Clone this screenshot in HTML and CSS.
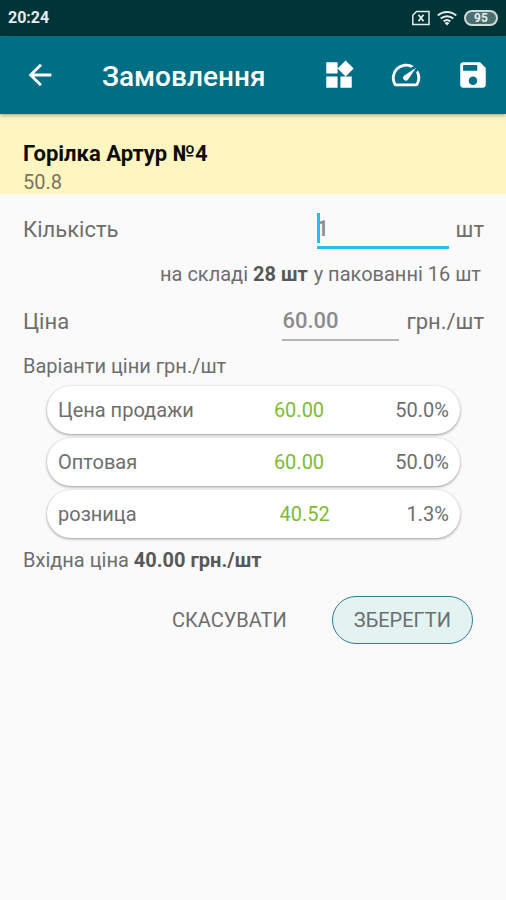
FILE: index.html
```html
<!DOCTYPE html>
<html lang="uk">
<head>
<meta charset="utf-8">
<meta name="viewport" content="width=device-width, initial-scale=1">
<title>Замовлення</title>
<link rel="stylesheet" href="styles.css">
</head>
<body>
<div class="status">
  <span class="clock">20:24</span>
  <div class="status-icons">
    <svg width="18" height="16" viewBox="0 0 18 16" fill="none" stroke="currentColor" stroke-width="1.5"><path d="M4.500 1.500H17v13H.8V5.200z"/><path d="M6.500 4.800l5 6.400M11.500 4.800l-5 6.400" stroke-width="1.800"/></svg>
    <svg width="20" height="16" viewBox="0 0 20 16" fill="none" stroke="currentColor" stroke-width="2"><path d="M.8 5.600C6 .8 14 .8 19.200 5.600M3.700 8.600c3.600-3.200 9-3.200 12.600 0M6.700 11.400c2-1.600 4.600-1.600 6.600 0"/><path d="M10 15.500l-2.400-2.500q2.400-1.800 4.800 0z" fill="currentColor" stroke="none"/></svg>
    <span class="battery">95</span>
  </div>
</div>
<header class="appbar">
  <button class="icon-button back" aria-label="Назад"><svg width="34" height="34" viewBox="0 0 24 24"><path fill="currentColor" d="M20 11H7.830l5.590-5.590L12 4l-8 8 8 8 1.410-1.410L7.830 13H20v-2z"/></svg></button>
  <h1>Замовлення</h1>
  <button class="icon-button" aria-label="Категорії"><svg width="34" height="34" viewBox="0 0 24 24"><path fill="currentColor" d="M13 13v8h8v-8h-8zM3 21h8v-8H3v8zM3 3v8h8V3H3zm13.660-1.310L11 7.340 16.660 13l5.660-5.660-5.660-5.650z"/></svg></button>
  <button class="icon-button" aria-label="Показники"><svg width="34" height="34" viewBox="0 0 24 24"><path fill="currentColor" d="M20.380 8.570l-1.230 1.850a8 8 0 0 1-.22 7.580H5.070A8 8 0 0 1 15.580 6.850l1.850-1.230A10 10 0 0 0 3.350 19a2 2 0 0 0 1.720 1h13.850a2 2 0 0 0 1.740-1 10 10 0 0 0-.27-10.440zm-9.790 6.840a2 2 0 0 0 2.830 0l5.660-8.490-8.490 5.660a2 2 0 0 0 0 2.830z"/></svg></button>
  <button class="icon-button" aria-label="Зберегти замовлення"><svg width="34" height="34" viewBox="0 0 24 24"><path fill="currentColor" d="M17 3H5c-1.110 0-2 .9-2 2v14c0 1.100.89 2 2 2h14c1.100 0 2-.9 2-2V7l-4-4zm-5 16c-1.660 0-3-1.340-3-3s1.340-3 3-3 3 1.340 3 3-1.340 3-3 3zm3-10H5V5h10v4z"/></svg></button>
</header>
<section class="product">
  <h2>Горілка Артур №4</h2>
  <p>50.8</p>
</section>
<main>
  <div class="field">
    <label for="qty">Кількість</label>
    <span class="entry entry-active"><input id="qty" type="text" inputmode="decimal" value="1"></span>
    <span class="unit">шт</span>
  </div>
  <p class="stock"><span>на складі <b>28 шт</b></span><span>у пакованні 16 шт</span></p>
  <div class="field">
    <label for="price">Ціна</label>
    <span class="entry entry-price"><input id="price" type="text" inputmode="decimal" value="60.00"></span>
    <span class="unit">грн./шт</span>
  </div>
  <h3>Варіанти ціни грн./шт</h3>
  <ul class="variants">
    <li><span class="name">Цена продажи</span><span class="amount">60.00</span><span>50.0%</span></li>
    <li><span class="name">Оптовая</span><span class="amount">60.00</span><span>50.0%</span></li>
    <li><span class="name">розница</span><span class="amount">40.52</span><span>1.3%</span></li>
  </ul>
  <p class="cost">Вхідна ціна <b>40.00 грн./шт</b></p>
  <div class="actions">
    <button class="action">СКАСУВАТИ</button>
    <button class="action action-primary">ЗБЕРЕГТИ</button>
  </div>
</main>
</body>
</html>
```
FILE: styles.css
```css
* { box-sizing: border-box; }
body {
  margin: 0;
  min-height: 100vh;
  background: #fafafa;
  color: #6e6e6e;
  font: 20px/24px Roboto, sans-serif;
}
h1, h2, h3, p, ul { margin: 0; padding: 0; }
button, input { font: inherit; color: inherit; border: 0; background: none; padding: 0; }
svg { display: block; }
b { font-weight: 700; color: #585858; }

.status {
  display: flex;
  align-items: center;
  justify-content: space-between;
  height: 36px;
  padding: 0 8px;
  background: #003538;
  color: #e4ecec;
}
.clock { font-size: 16px; font-weight: 700; }
.status-icons { display: flex; align-items: center; gap: 7px; }
.battery {
  width: 34px;
  border: 2px solid #cfdada;
  border-radius: 8px;
  background: #4b6f71;
  font-size: 12px;
  line-height: 12px;
  font-weight: 700;
  text-align: center;
}

.appbar {
  position: relative;
  display: flex;
  align-items: center;
  gap: 33px;
  height: 78px;
  padding: 0 16px 0 23px;
  background: #006f85;
  color: #fff;
  box-shadow: 0 1px 4px rgba(0, 0, 0, .4);
}
.appbar h1 { flex: 1; margin-left: 12px; padding-top: 4px; font-size: 28px; line-height: 32px; font-weight: 500; }

.product { padding: 26px 23px 0; height: 80px; background: #fff5c0; }
.product h2 { font-size: 22px; line-height: 28px; font-weight: 700; color: #0c0c0c; }
.product p { line-height: 28px; color: #77735f; }

main { padding: 16px 22px 24px 23px; }
.field { display: flex; align-items: flex-start; height: 44px; font-size: 22px; line-height: 40px; }
.field label { flex: 1; }
.entry { position: relative; width: 132px; margin-right: 7px; height: 39px; border-bottom: 3px solid #1fc3ea; }
.entry input { display: block; width: 100%; height: 38px; font-weight: 500; color: #8c8c8c; outline: 0; }
.entry-active::before {
  content: "";
  position: absolute;
  left: 0;
  top: 3px;
  width: 3px;
  height: 30px;
  background: #1fc3ea;
}
.entry-price { width: 117px; border-bottom: 2px solid #b5b5b5; }
.stock { display: flex; justify-content: flex-end; gap: 6px; padding: 8px 3px 16px 0; }
h3 { padding-top: 8px; font-size: 20px; font-weight: 400; }

.variants { list-style: none; padding: 8px 24px 10px 24px; display: grid; gap: 4px; }
.variants li {
  display: flex;
  align-items: center;
  height: 48px;
  padding: 0 11px;
  border-radius: 24px;
  background: #fff;
  box-shadow: 0 1px 3px rgba(0, 0, 0, .4);
}
.name { flex-basis: 37%; }
.amount { flex: 1; text-align: center; color: #7dbb33; }

.actions { display: flex; justify-content: flex-end; gap: 45px; padding: 24px 11px 0 0; }
.action { height: 48px; }
.action-primary { padding: 0 21px; border: 1px solid #2f8093; border-radius: 24px; background: #e2f3f1; }
```
